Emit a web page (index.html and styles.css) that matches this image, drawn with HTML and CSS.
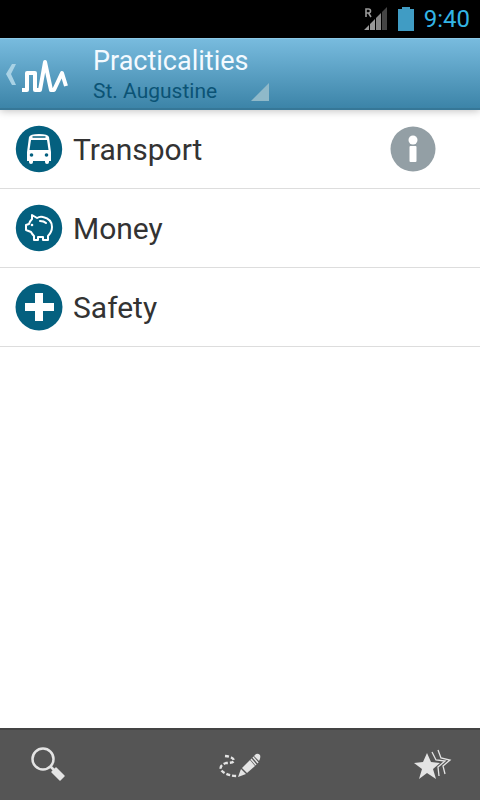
FILE: index.html
```html
<!DOCTYPE html>
<html lang="en">
<head>
    <meta charset="UTF-8">
    <meta name="viewport" content="width=device-width, initial-scale=1.0">
    <title>Practicalities - St. Augustine</title>
    <link rel="stylesheet" href="styles.css">
</head>
<body>

    <!-- Status bar -->
    <div class="status-bar">
        <svg class="signal" width="24" height="24" viewBox="0 0 24 24">
            <path d="M0 23L5 18V23ZM6 17L11 12V23H6Z" fill="#999"/>
            <path d="M12 11L17 6V23H12Z" fill="#888"/>
            <path d="M18 5L23 0V23H18Z" fill="#444"/>
            <path d="M2 10V2H4.500A2 2 0 0 1 4.500 6H2M4.500 6L7 10" fill="none" stroke="#999" stroke-width="1.600"/>
        </svg>
        <svg class="battery" width="16" height="24" viewBox="0 0 16 24">
            <path d="M4 0H12V2H16V24H0V2H4Z" fill="#409cc4"/>
        </svg>
        <span class="clock">9:40</span>
    </div>

    <!-- Action bar -->
    <header class="action-bar">
        <button class="up" aria-label="Back">
            <svg width="84" height="40" viewBox="0 0 84 40">
                <path d="M12 9H16L11 19L16 30H12L6 19Z" fill="#a9d2e5"/>
                <path d="M22 35H27V18H35V35H40L45 7L51 35H54L62 18L66 31" fill="none" stroke="#fff" stroke-width="4" stroke-linejoin="round"/>
            </svg>
        </button>
        <button class="spinner">
            <span class="title">Practicalities</span>
            <span class="subtitle">St. Augustine</span>
        </button>
    </header>

    <!-- Categories -->
    <main>
        <ul class="list">
            <li>
                <a href="#transport">
                    <svg width="48" height="48" viewBox="0 0 48 48">
                        <circle cx="24" cy="24" r="23.200" fill="#04607f"/>
                        <path d="M14 12Q15 9 24 9Q33 9 34 12L36 27V36H34V37Q34 39 32 39Q30 39 30 37V36H18V37Q18 39 16 39Q14 39 14 37V36H12V27Z" fill="#fff"/>
                        <path d="M17.500 12H30.500" stroke="#04607f" stroke-width="1.500"/>
                        <path d="M16 15H32L33.500 25H14.500Z" fill="#04607f"/>
                        <circle cx="16.500" cy="30" r="1.800" fill="#04607f"/>
                        <circle cx="31.500" cy="30" r="1.800" fill="#04607f"/>
                    </svg>
                    <span>Transport</span>
                </a>
                <button class="info" aria-label="Information">
                    <svg width="46" height="46" viewBox="0 0 46 46">
                        <circle cx="23" cy="23" r="22.500" fill="#939fa5"/>
                        <circle cx="23" cy="14" r="4.500" fill="#fff"/>
                        <rect x="19.500" y="20" width="7" height="16" rx="1" fill="#fff"/>
                    </svg>
                </button>
            </li>
            <li>
                <a href="#money">
                    <svg width="48" height="48" viewBox="0 0 48 48">
                        <circle cx="24" cy="24" r="23.200" fill="#04607f"/>
                        <path d="M17 15V11L22 14Q25 12 28 13Q37 15 37 23Q37 28 33 32V36H28V33H23V36H19V32Q17 30 16 28L11 26V21L14 20Q15 17 17 15Z" fill="none" stroke="#fff" stroke-width="2" stroke-linejoin="round"/>
                        <path d="M25 17Q29 17 31 19" fill="none" stroke="#fff" stroke-width="2" stroke-linecap="round"/>
                        <circle cx="17" cy="21" r="1.300" fill="#fff"/>
                    </svg>
                    <span>Money</span>
                </a>
            </li>
            <li>
                <a href="#safety">
                    <svg width="48" height="48" viewBox="0 0 48 48">
                        <circle cx="24" cy="24" r="23.500" fill="#04607f"/>
                        <path d="M20 10H28V20H39V28H28V38H20V28H10V20H20Z" fill="#fff"/>
                    </svg>
                    <span>Safety</span>
                </a>
            </li>
        </ul>
    </main>

    <!-- Bottom bar -->
    <nav class="bottom-bar">
        <button aria-label="Search">
            <svg width="48" height="48" viewBox="0 0 48 48">
                <circle cx="19" cy="18" r="10.500" fill="none" stroke="#e4e4e4" stroke-width="2.500"/>
                <path d="M26 25L30 29" stroke="#e4e4e4" stroke-width="2.500"/>
                <path d="M28 31L32 27L40 35L36 39Z" fill="#e4e4e4" stroke="#e4e4e4" stroke-width="1.500" stroke-linejoin="round"/>
            </svg>
        </button>
        <button aria-label="Plan">
            <svg width="48" height="48" viewBox="0 0 48 48">
                <path d="M9 15Q18 16 18 20Q17 22 10 22Q2 25 6 30Q11 35 22 35" fill="none" stroke="#e4e4e4" stroke-width="2.400" stroke-dasharray="4 2"/>
                <path d="M22 36L25 28L30 33Z" fill="#e4e4e4"/>
                <path d="M26 27L34 19L39 25L31 32Z" fill="#e4e4e4"/>
                <path d="M35 18L40 24M37 16L42 22" stroke="#e4e4e4" stroke-width="1.500"/>
                <path d="M38 15L40 13Q42 12 44 14Q45 16 43 20Z" fill="#e4e4e4"/>
            </svg>
        </button>
        <button aria-label="Favourites">
            <svg width="48" height="48" viewBox="0 0 48 48">
                <path d="M19 12L23 21L32 22L25 28L28 38L19 32L11 38L14 28L6 22L15 21Z" fill="#e4e4e4"/>
                <path d="M24 11L28 19L37 20L30 26L31 35M30 9L33 17L42 19L35 25L37 33" fill="none" stroke="#e4e4e4" stroke-width="1.300"/>
            </svg>
        </button>
    </nav>

</body>
</html>
```
FILE: styles.css
```css
* {
    box-sizing: border-box;
}

body {
    font-family: Roboto, "Noto Sans", sans-serif;
    margin: 0;
    background-color: #fff;
    color: #333;
    min-height: 100vh;
    display: flex;
    flex-direction: column;
}

svg {
    display: block;
    flex: none;
}

button {
    font-family: inherit;
    background: none;
    border: none;
    margin: 0;
    padding: 0;
    cursor: pointer;
}

/* Status bar */
.status-bar {
    height: 38px;
    padding-right: 10px;
    background-color: #000;
    display: flex;
    align-items: center;
    justify-content: flex-end;
}

.battery {
    margin: 0 10px;
}

.clock {
    color: #33b5e5;
    font-size: 24px;
    line-height: 38px;
}

/* Action bar */
.action-bar {
    position: relative;
    height: 72px;
    padding-top: 2px;
    background: linear-gradient(#78bbde, #3c84a8);
    border-top: 1px solid #8cc8e6;
    border-bottom: 2px solid #367797;
    box-shadow: 0 1px 8px rgba(0, 0, 0, 0.25);
    display: flex;
    align-items: center;
}

.up {
    width: 84px;
}

.spinner {
    position: relative;
    width: 186px;
    padding-left: 9px;
    text-align: left;
}

/* Small corner triangle of the drop-down */
.spinner::after {
    content: "";
    position: absolute;
    right: 1px;
    bottom: 4px;
    border-left: 18px solid transparent;
    border-bottom: 18px solid #8fb9c9;
}

.title {
    display: block;
    color: #f4faff;
    font-size: 27px;
    line-height: 32px;
}

.subtitle {
    display: block;
    color: #0b5375;
    font-size: 21px;
    line-height: 28px;
}

/* List */
main {
    flex: 1;
}

.list {
    list-style: none;
    margin: 0;
    padding: 0;
}

.list li {
    height: 79px;
    padding: 0 44px 0 15px;
    border-bottom: 1px solid #ddd;
    display: flex;
    align-items: center;
}

.list a {
    flex: 1;
    display: flex;
    align-items: center;
    gap: 10px;
    color: #333;
    font-size: 30px;
    line-height: 40px;
    text-decoration: none;
}

.list span {
    padding-top: 2px;
}

/* Bottom bar */
.bottom-bar {
    height: 72px;
    padding: 0 24px;
    background-color: #555;
    border-top: 2px solid #444;
    display: flex;
    align-items: center;
    justify-content: space-between;
}
```
